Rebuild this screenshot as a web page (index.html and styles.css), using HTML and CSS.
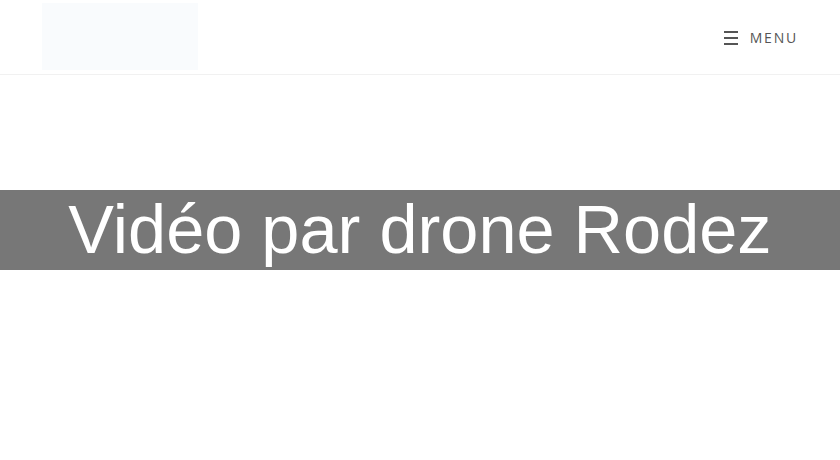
FILE: index.html
```html
<!doctype html>
<html><head>
	<meta charset="utf-8">
	<title>Vidéo par drone Rodez</title>
<link rel="stylesheet" href="styles.css">
</head><body>
	<header class="site-header">
		<div class="container">
			<a class="logo" href="#"></a>
			<a class="menu-toggle" href="#">
				<span class="burger"><i></i><i></i><i></i></span>
				<span class="menu-label">Menu</span>
			</a>
		</div>
	</header>
	<div class="page-title">
		<h1>Vidéo par drone Rodez</h1>
	</div>
</body></html>
```

FILE: styles.css
```css
body {
	margin: 0;
	background: #fff;
	font: 14px/1.6 'Open Sans', sans-serif;
}

.site-header {
	height: 74px;
	border-bottom: 1px solid #f1f1f1;
}

.container {
	display: flex;
	align-items: center;
	justify-content: space-between;
	height: 100%;
	padding: 0 42px;
}

.logo {
	display: block;
	width: 156px;
	height: 67px;
	margin-top: -2px;
	background: #f9fbfd;
}

.menu-toggle {
	display: flex;
	align-items: center;
	gap: 12px;
	color: #555;
	text-decoration: none;
	margin-top: 3px;
}

.burger {
	display: flex;
	flex-direction: column;
	gap: 4px;
	width: 14px;
}

.burger i {
	display: block;
	height: 2px;
	background: #555;
}

.menu-label {
	text-transform: uppercase;
	letter-spacing: 1.8px;
	font-size: 14px;
}

.page-title {
	margin-top: 115px;
	background: #777;
	height: 80px;
	overflow: hidden;
	text-align: center;
}

.page-title h1 {
	margin: 0;
	color: #fff;
	font: 68.5px/79px 'Liberation Sans', Arial, sans-serif;
}
```
